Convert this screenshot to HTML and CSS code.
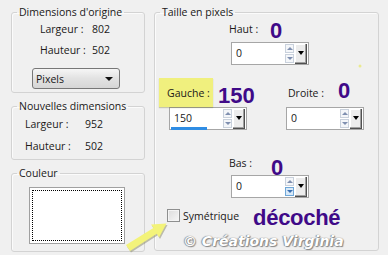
FILE: index.html
```html
<!DOCTYPE html>
<html lang="fr">
    <head>
        <meta charset="utf-8">
        <title>Taille du support</title>
        <link rel="stylesheet" href="styles.css">
    </head>
    <body>
        <div class="dialog">
            <div class="col-left">
                <fieldset class="group g-orig">
                    <legend>Dimensions d'origine</legend>
                    <div class="dims dims-orig">
                        <span>Largeur :</span><span class="num">802</span>
                        <span>Hauteur :</span><span class="num">502</span>
                    </div>
                    <div class="select"><span>Pixels</span><span class="caret"></span></div>
                </fieldset>
                <fieldset class="group g-new">
                    <legend>Nouvelles dimensions</legend>
                    <div class="dims dims-new">
                        <span>Largeur :</span><span>952</span>
                        <span>Hauteur :</span><span>502</span>
                    </div>
                </fieldset>
                <fieldset class="group g-color">
                    <legend>Couleur</legend>
                    <div class="swatch"></div>
                </fieldset>
            </div>

            <fieldset class="group g-size">
                <legend>Taille en pixels</legend>

                <div class="field f-top">
                    <div class="field-head"><span class="lbl">Haut :</span><span class="big">0</span></div>
                    <div class="spin">
                        <span class="spin-val">0</span>
                        <span class="spin-arrows"><i class="arr up"></i><i class="arr down"></i></span>
                        <span class="spin-drop"></span>
                    </div>
                </div>

                <div class="row-mid">
                    <div class="field f-left">
                        <div class="field-head"><span class="note">Gauche :</span><span class="big">150</span></div>
                        <div class="spin">
                            <span class="spin-val">150<b class="caret-bar"></b></span>
                            <span class="spin-arrows"><i class="arr up"></i><i class="arr down"></i></span>
                            <span class="spin-drop"></span>
                        </div>
                    </div>
                    <div class="field f-right">
                        <div class="field-head"><span class="lbl">Droite :</span><span class="big">0</span></div>
                        <div class="spin">
                            <span class="spin-val">0</span>
                            <span class="spin-arrows"><i class="arr up"></i><i class="arr down"></i></span>
                            <span class="spin-drop"></span>
                        </div>
                    </div>
                </div>

                <div class="field f-bottom">
                    <div class="field-head"><span class="lbl">Bas :</span><span class="big">0</span></div>
                    <div class="spin">
                        <span class="spin-val">0</span>
                        <span class="spin-arrows"><i class="arr up"></i><i class="arr down hot"></i></span>
                        <span class="spin-drop"></span>
                    </div>
                </div>

                <div class="check-row">
                    <span class="box"></span>
                    <span class="check-label">Symétrique</span>
                    <span class="big">décoché</span>
                </div>

                <div class="credit">© Créations Virginia</div>
            </fieldset>
        </div>

        <!-- pointer arrow drawn over the dialog -->
        <svg class="overlay" width="388" height="255" viewBox="0 0 388 255">
            <polygon points="126,245 153.4,228 151,224.5 166.5,223.5 159,237.5 156.8,233.8 130,251"
                     fill="#8f8f70" transform="translate(1,1.5)" opacity="0.55"/>
            <polygon points="126,245 153.4,228 151,224.5 166.5,223.5 159,237.5 156.8,233.8 130,251"
                     fill="#f3f37a"/>
            <circle cx="360" cy="66" r="1.5" fill="#eaea90"/>
        </svg>
    </body>
</html>
```

FILE: styles.css
```css
body {
    margin: 0;
    width: 388px;
    height: 255px;
    overflow: hidden;
    position: relative;
    background-color: #f0f0f0;
    font-family: "Open Sans", "Noto Sans", sans-serif;
    font-size: 10.5px;
    color: #201818;
    white-space: nowrap;
}
.dialog {
    display: flex;
    gap: 9px;
    padding: 4px 0 0 11px;
}
.col-left {
    display: flex;
    flex-direction: column;
    gap: 5px;
    width: 134px;
}
.group {
    margin: 0;
    padding: 0;
    min-width: 0;
    box-sizing: border-box;
    border: 1px solid #d3d3d3;
    border-radius: 3px;
    box-shadow: inset 1px 1px 0 #fbfbfb;
}
.group legend {
    margin-left: 5px;
    padding: 0 2px;
    line-height: 16px;
}
.g-orig {
    height: 89px;
}
.g-new {
    height: 62px;
}
.g-color {
    height: 87px;
}
.g-size {
    width: 225px;
    height: 247px;
}

/* dimensions lists */
.dims {
    display: grid;
    line-height: 16px;
}
.dims-orig {
    grid-template-columns: 45px 25px;
    row-gap: 5px;
    margin-top: 1px;
    padding-left: 28px;
}
.dims-orig .num {
    text-align: right;
}
.dims-new {
    grid-template-columns: 60px auto;
    row-gap: 6px;
    margin-top: 2px;
    padding-left: 13px;
}

.select {
    display: flex;
    align-items: center;
    justify-content: space-between;
    box-sizing: border-box;
    width: 88px;
    height: 21px;
    margin: 10px 0 0 20px;
    padding: 0 6px 0 3px;
    border: 1px solid #777;
    border-radius: 3px;
    background: linear-gradient(#f6f6f6, #e2e2e2 50%, #d6d6d6);
}
.caret {
    width: 0;
    height: 0;
    border-left: 4px solid transparent;
    border-right: 4px solid transparent;
    border-top: 4px solid #111;
}

.swatch {
    width: 96px;
    height: 57px;
    box-sizing: border-box;
    margin: 6px 0 0 17px;
    border: 1px solid #a0a0a0;
    background: #fff;
    outline: 1px dotted #000;
    outline-offset: -4px;
}

/* right side fields */
.field-head {
    display: flex;
}
.lbl {
    line-height: 16px;
}
.big {
    font-family: "Liberation Sans", Arial, sans-serif;
    font-weight: bold;
    font-size: 22px;
    line-height: 22px;
    color: #3f0a88;
}
.f-top {
    margin-left: 74px;
}
.f-top .field-head {
    height: 22px;
}
.f-top .lbl {
    width: 41px;
    margin-top: 1px;
}
.f-top .spin,
.f-bottom .spin {
    margin-left: 2px;
}

.row-mid {
    display: flex;
    margin-top: 13px;
}
.f-left {
    width: 127px;
    margin-left: 4px;
}
.row-mid .field-head {
    height: 29px;
    align-items: flex-end;
}
.note {
    box-sizing: border-box;
    width: 54px;
    height: 29px;
    padding: 7px 0 0 8px;
    line-height: 16px;
    background-color: #f0f07e;
    box-shadow: 0 1px 1px rgba(120, 120, 60, 0.35);
}
.f-left .big {
    margin-left: 5px;
}
.f-left .spin {
    margin-left: 10px;
}
.f-right .lbl {
    width: 50px;
    margin: 0 0 6px 2px;
}
.f-right .big {
    margin-bottom: 5px;
}

.f-bottom {
    margin: 25px 0 0 74px;
}
.f-bottom .field-head {
    height: 20px;
}
.f-bottom .lbl {
    width: 42px;
}
.f-bottom .big {
    margin-top: 2px;
}

/* spinner box */
.spin {
    display: flex;
    align-items: center;
    box-sizing: border-box;
    width: 78px;
    height: 23px;
    border: 1px solid #a6a6a6;
    background: #fff;
}
.spin-val {
    flex: 1;
    display: flex;
    flex-direction: column;
    padding-left: 4px;
    line-height: 15px;
}
.caret-bar {
    width: 36px;
    height: 3px;
    margin: 1px 0 -4px -3px;
    background: #2f8de4;
}
.spin-arrows {
    display: flex;
    flex-direction: column;
    gap: 1px;
    width: 9px;
    margin-right: 1px;
}
.arr {
    box-sizing: border-box;
    height: 9px;
    border: 1px solid #c9d1dc;
    background: #f4f6f9;
    display: flex;
    align-items: center;
    justify-content: center;
}
.arr::before {
    content: "";
    border-left: 3px solid transparent;
    border-right: 3px solid transparent;
}
.up::before {
    border-bottom: 3px solid #7f8fb0;
}
.down::before {
    border-top: 3px solid #7f8fb0;
}
.hot {
    border-color: #6fa7d8;
    background: #d8e9f8;
}
.hot::before {
    border-top-color: #3a6fb0;
}
.spin-drop {
    box-sizing: border-box;
    width: 12px;
    height: 20px;
    margin-right: 1px;
    display: flex;
    align-items: center;
    justify-content: center;
    background: #ececec;
    border-right: 1px solid #505050;
    border-bottom: 1px solid #505050;
    box-shadow: inset -1px -1px 0 #a0a0a0, inset 1px 1px 0 #fff;
}
.spin-drop::before {
    content: "";
    border-left: 3px solid transparent;
    border-right: 3px solid transparent;
    border-top: 4px solid #000;
}

/* checkbox row */
.check-row {
    display: flex;
    align-items: flex-start;
    height: 22px;
    margin: 9px 0 0 12px;
}
.box {
    box-sizing: border-box;
    width: 13px;
    height: 13px;
    margin-top: 2px;
    border: 1px solid #8e8f8f;
    background: linear-gradient(135deg, #dcdcdc, #f6f6f6);
    box-shadow: inset 0 0 0 1px #f4f4f4;
}
.check-label {
    margin: 1px 0 0 3px;
    line-height: 16px;
}
.check-row .big {
    margin-left: 14px;
    letter-spacing: -0.3px;
}

.credit {
    margin: 3px 0 0 28px;
    font-family: "DejaVu Sans", sans-serif;
    font-weight: bold;
    font-style: italic;
    font-size: 14px;
    line-height: 18px;
    color: #fff;
    text-shadow: 0 0 1px #777, 1px 1px 1px #888, -1px 0 1px #999;
}

.overlay {
    position: absolute;
    top: 0;
    left: 0;
    pointer-events: none;
}
```
